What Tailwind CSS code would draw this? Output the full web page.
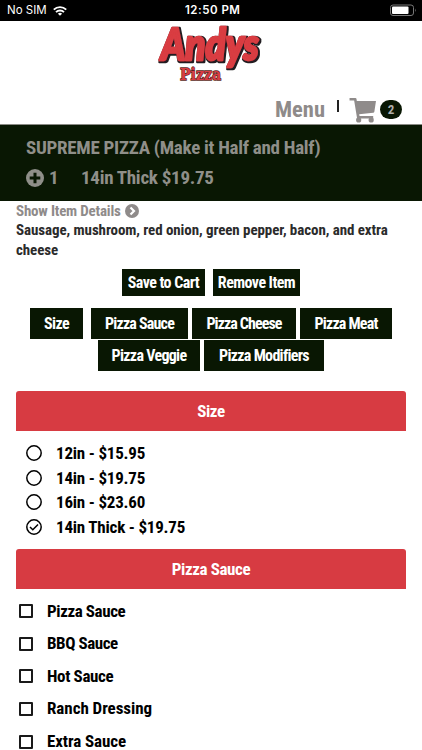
<!DOCTYPE html>
<html lang="en">
<head>
    <meta charset="UTF-8">
    <meta name="viewport" content="width=device-width, initial-scale=1.0">
    <title>Supreme Pizza - Andys Pizza</title>
    <script src="https://cdn.jsdelivr.net/npm/@tailwindcss/browser@4"></script>
</head>
<body class="bg-white h-[750px] overflow-hidden font-['Liberation_Sans_Narrow','Roboto_Condensed',sans-serif] font-bold text-black">
    <!-- Status bar -->
    <div class="h-[21px] bg-black text-white flex items-center justify-between relative font-['Inter',sans-serif] text-[11.5px] leading-none font-normal">
        <div class="flex items-center gap-[6px] pl-[7px]">
            <span>No SIM</span>
            <svg class="w-[14px] h-[10px]" viewBox="0 0 14 10" fill="none" stroke="#fff" stroke-width="1.9">
                <path d="M.8 3.7a8.8 8.8 0 0 1 12.4 0M3 6.1a5.7 5.7 0 0 1 8 0"/>
                <path d="M7 9.8 4.900 7.700a3 3 0 0 1 4.200 0z" fill="#fff" stroke="none"/>
            </svg>
        </div>
        <span class="absolute left-[185px] font-semibold tracking-[0.5px]">12:50 PM</span>
        <svg class="w-[27px] h-[13px] mr-[5px]" viewBox="0 0 27 13">
            <rect x=".5" y="1" width="23" height="10.500" rx="2.500" fill="none" stroke="#777"/>
            <rect x="2" y="2.500" width="16.500" height="7.500" rx="1" fill="#fff"/>
            <path d="M25 4.500q1.500 1.700 0 3.500z" fill="#777"/>
        </svg>
    </div>

    <!-- Logo and navigation -->
    <header class="h-[104px] border-b border-[#8a8a85] flex flex-col items-center">
        <svg class="w-[110px] h-[62px] mt-[2px] overflow-visible" viewBox="0 0 110 62">
            <defs>
                <filter id="outline" x="-10%" y="-10%" width="120%" height="130%">
                    <feMorphology in="SourceAlpha" operator="dilate" radius="1.200" result="grow"/>
                    <feOffset in="grow" dx=".6" dy=".8" result="shift"/>
                    <feFlood flood-color="#231f20"/>
                    <feComposite in2="shift" operator="in" result="edge"/>
                    <feMerge><feMergeNode in="edge"/><feMergeNode in="SourceGraphic"/></feMerge>
                </filter>
            </defs>
            <text transform="translate(5 37) scale(.88 1)" font-family="Lato, sans-serif" font-weight="900" font-style="italic" font-size="43" textLength="111" lengthAdjust="spacingAndGlyphs" fill="#d93c42" stroke="#d93c42" stroke-width="2.600" stroke-linejoin="round" filter="url(#outline)">Andys</text>
            <text x="24" y="57" font-family="DejaVu Serif, serif" font-weight="700" font-size="17" textLength="41" lengthAdjust="spacingAndGlyphs" fill="#d93c42" stroke="#5a1e20" stroke-width="1.400" paint-order="stroke">Pizza</text>
        </svg>
        <nav class="w-full h-[36px] mt-[6px] pr-[20px] flex items-center justify-end text-[#8f8b8a]">
            <a class="text-[22.500px] leading-none mt-[3px]">Menu</a>
            <span class="w-[2px] h-[12px] bg-[#222] ml-[12px] -mt-[4px]"></span>
            <svg class="w-[28px] h-[25px] ml-[10px] mt-[5px]" viewBox="0 0 28 26" fill="#8f8b8a">
                <path d="M0 0h6.200q.8 0 1 .8l.4 2.400H27.500L25.800 14.200q-.2 1-1.200 1.100L10 16.800l.4 1.800H24.600v2.600H8.800q-.9 0-1.100-.9L4.800 2.600H0z"/>
                <circle cx="9.500" cy="22.800" r="2.700"/>
                <circle cx="22.500" cy="22.800" r="2.700"/>
            </svg>
            <span class="w-[22px] h-[19px] rounded-full bg-[#091703] ml-[3px] mt-[4px] text-[13px] leading-[20px] text-center text-[#b0afab]">2</span>
        </nav>
    </header>

    <!-- Item heading -->
    <section class="h-[76px] bg-[#091703] px-[26px] pt-[8px] text-[#8f8f89] text-[19px] leading-[30px] tracking-[-0.28px]">
        <h1>SUPREME PIZZA (Make it Half and Half)</h1>
        <div class="flex items-center">
            <svg class="w-[18px] h-[18px]" viewBox="0 0 18 18">
                <circle cx="9" cy="9" r="9" fill="#8f8f89"/>
                <path d="M9 3.700v10.600M3.700 9h10.600" stroke="#091703" stroke-width="3"/>
            </svg>
            <span class="ml-[5px] w-[32px]">1</span>
            <span>14in Thick $19.75</span>
        </div>
    </section>

    <main class="px-[16px]">
        <a class="flex items-center h-[20px] text-[15px] tracking-[-0.2px] text-[#8f8b8a]">
            <span>Show Item Details</span>
            <svg class="w-[14px] h-[14px] ml-[4px]" viewBox="0 0 14 14">
                <circle cx="7" cy="7" r="7" fill="#8f8b8a"/>
                <path d="M5.500 3.500 9 7l-3.500 3.500" fill="none" stroke="#fff" stroke-width="2.200"/>
            </svg>
        </a>
        <p class="text-[15px] leading-[19.500px] tracking-[-0.08px] text-[#2b2b2b]">Sausage, mushroom, red onion, green pepper, bacon, and extra<br>cheese</p>

        <div class="flex justify-center gap-[8px] mt-[9px] text-white text-[16px] tracking-[-0.55px] leading-[27px] text-center">
            <button class="w-[83px] bg-[#091703]">Save to Cart</button>
            <button class="w-[87px] bg-[#091703]">Remove Item</button>
        </div>
        <div class="flex justify-center mt-[12px] text-white text-[16px] tracking-[-0.6px] leading-[31px] text-center">
            <button class="w-[53px] mr-[8px] bg-[#091703]">Size</button>
            <button class="w-[97px] mr-[4px] bg-[#091703] tracking-[-0.8px]">Pizza Sauce</button>
            <button class="w-[104px] mr-[4px] bg-[#091703] tracking-[-0.9px]">Pizza Cheese</button>
            <button class="w-[92px] bg-[#091703] tracking-[-0.8px]">Pizza Meat</button>
        </div>
        <div class="flex justify-center gap-[4px] mt-[1px] text-white text-[16px] tracking-[-0.7px] leading-[31px] text-center">
            <button class="w-[102px] bg-[#091703]">Pizza Veggie</button>
            <button class="w-[120px] bg-[#091703]">Pizza Modifiers</button>
        </div>

        <!-- Size -->
        <h2 class="h-[40px] mt-[20px] rounded-t-[3px] bg-[#d73b42] text-white text-[17px] tracking-[-0.4px] leading-[40px] text-center">Size</h2>
        <ul class="mt-[10px] pl-[10px] text-[17px] tracking-[-0.2px] leading-[24.500px]">
            <li class="flex items-center h-[24.500px]">
                <svg class="w-[16px] h-[16px] mr-[14px]" viewBox="0 0 16 16" fill="none" stroke="#000" stroke-width="1.500"><circle cx="8" cy="8" r="7.200"/></svg>
                <span>12in - $15.95</span>
            </li>
            <li class="flex items-center h-[24.500px]">
                <svg class="w-[16px] h-[16px] mr-[14px]" viewBox="0 0 16 16" fill="none" stroke="#000" stroke-width="1.500"><circle cx="8" cy="8" r="7.200"/></svg>
                <span>14in - $19.75</span>
            </li>
            <li class="flex items-center h-[24.500px]">
                <svg class="w-[16px] h-[16px] mr-[14px]" viewBox="0 0 16 16" fill="none" stroke="#000" stroke-width="1.500"><circle cx="8" cy="8" r="7.200"/></svg>
                <span>16in - $23.60</span>
            </li>
            <li class="flex items-center h-[24.500px]">
                <svg class="w-[16px] h-[16px] mr-[14px]" viewBox="0 0 16 16" fill="none" stroke="#000" stroke-width="1.500">
                    <circle cx="8" cy="8" r="7.200"/>
                    <path d="m4 8 2.800 2.800L12 5.500"/>
                </svg>
                <span>14in Thick - $19.75</span>
            </li>
        </ul>

        <!-- Pizza Sauce -->
        <h2 class="h-[40px] mt-[10px] rounded-t-[3px] bg-[#d73b42] text-white text-[17px] tracking-[-0.4px] leading-[40px] text-center">Pizza Sauce</h2>
        <ul class="mt-[6px] pl-[3px] text-[17px]">
            <li class="flex items-center h-[32.600px]"><span class="w-[14px] h-[14px] mr-[14px] rounded-[1px] border-2 border-[#1a1a1a]"></span><span class="tracking-[-0.4px]">Pizza Sauce</span></li>
            <li class="flex items-center h-[32.600px]"><span class="w-[14px] h-[14px] mr-[14px] rounded-[1px] border-2 border-[#1a1a1a]"></span><span class="tracking-[-0.45px]">BBQ Sauce</span></li>
            <li class="flex items-center h-[32.600px]"><span class="w-[14px] h-[14px] mr-[14px] rounded-[1px] border-2 border-[#1a1a1a]"></span><span class="tracking-[-0.35px]">Hot Sauce</span></li>
            <li class="flex items-center h-[32.600px]"><span class="w-[14px] h-[14px] mr-[14px] rounded-[1px] border-2 border-[#1a1a1a]"></span><span class="tracking-[-0.05px]">Ranch Dressing</span></li>
            <li class="flex items-center h-[32.600px]"><span class="w-[14px] h-[14px] mr-[14px] rounded-[1px] border-2 border-[#1a1a1a]"></span><span class="tracking-[-0.1px]">Extra Sauce</span></li>
        </ul>
    </main>
</body>
</html>
